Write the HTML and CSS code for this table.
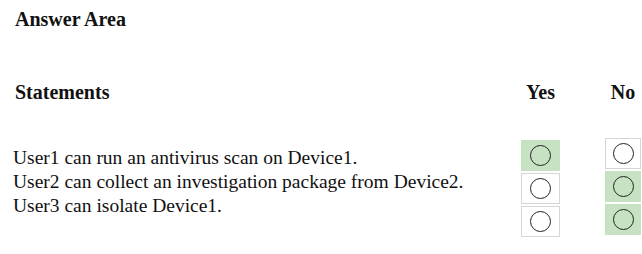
FILE: index.html
```html
<!DOCTYPE html>
<html lang="en">
<head>
    <meta charset="UTF-8">
    <title>Answer Area</title>
    <link rel="stylesheet" href="styles.css">
</head>
<body>
    <div id="answer">
        <h1>Answer Area</h1>
        <div class="head">
            <h2>Statements</h2>
            <h2 class="yes">Yes</h2>
            <h2 class="no">No</h2>
        </div>
        <div class="body">
            <div class="statements">
                <p>User1 can run an antivirus scan on Device1.</p>
                <p>User2 can collect an investigation package from Device2.</p>
                <p>User3 can isolate Device1.</p>
            </div>
            <div class="col col-yes">
                <span class="box picked"><i class="radio"></i></span>
                <span class="box"><i class="radio"></i></span>
                <span class="box"><i class="radio"></i></span>
            </div>
            <div class="col col-no">
                <span class="box"><i class="radio"></i></span>
                <span class="box picked"><i class="radio"></i></span>
                <span class="box picked"><i class="radio"></i></span>
            </div>
        </div>
    </div>
</body>
</html>
```
FILE: styles.css
```css
*{
    padding:0;
    margin:0;
}
html,body{
    width:100%;
    height:100%;
    color:#111;
    background-color:#fff;
    font-family:"Liberation Serif","Times New Roman",serif;
}
#answer{
    padding:7px 0 0 13px;
}
h1,h2{
    font-size:20px;
    font-weight:bold;
    line-height:24px;
    padding-left:2px;
}
.head{
    display:grid;
    grid-template-columns:508px 39px 45px 36px;
    margin-top:49px;
}
.head .yes{
    grid-column:2;
    text-align:center;
    padding-left:0;
}
.head .no{
    grid-column:4;
    text-align:center;
    padding-left:0;
}
.body{
    display:grid;
    grid-template-columns:508px 39px 45px 36px;
    margin-top:34px;
}
.statements{
    padding-top:8px;
    font-size:19.5px;
    line-height:24px;
}
.col{
    display:flex;
    flex-direction:column;
    gap:2px;
}
.col-yes{
    grid-column:2;
    margin-top:2px;
}
.col-no{
    grid-column:4;
}
.box{
    display:flex;
    align-items:center;
    justify-content:center;
    height:31px;
    border:1px solid #d6d6d6;
    box-sizing:border-box;
}
.box.picked{
    background-color:#c7e1c3;
    border-color:#c7e1c3;
}
.radio{
    display:block;
    width:21px;
    height:21px;
    border:1.5px solid #222;
    border-radius:50%;
    box-sizing:border-box;
}
```
